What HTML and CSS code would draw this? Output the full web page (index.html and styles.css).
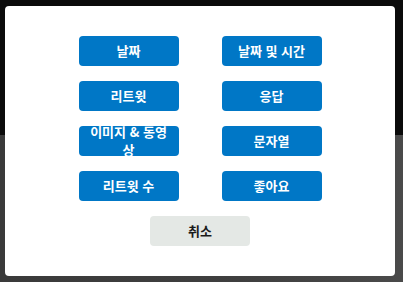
FILE: index.html
```html
<!DOCTYPE html>
<html lang="ko">
<head>
    <meta charset="UTF-8">
    <meta name="viewport" content="width=device-width, initial-scale=1.0">
    <title>정렬 기준</title>
    <link rel="stylesheet" href="styles.css">
</head>
<body>
    <div class="page">
        <div class="hero"></div>
        <div class="content"></div>
    </div>

    <div class="modal">
        <div class="options">
            <button class="option">날짜</button>
            <button class="option">날짜 및 시간</button>
            <button class="option">리트윗</button>
            <button class="option">응답</button>
            <button class="option">이미지 &amp; 동영상</button>
            <button class="option">문자열</button>
            <button class="option">리트윗 수</button>
            <button class="option">좋아요</button>
        </div>
        <button class="cancel">취소</button>
    </div>
</body>
</html>
```

FILE: styles.css
```css
/* page behind the dialog, dimmed */
body {
    margin: 0;
    font-family: "Noto Sans CJK KR", "Noto Sans", sans-serif;
    background-color: #3e3e3e;
}

.page {
    height: 282px;
    display: flex;
    flex-direction: column;
}

.hero {
    height: 135px;
    background-color: #0b0b0b;
}

.content {
    flex: 1;
    background: linear-gradient(90deg, #3a3a3a 0%, #3f3f3f 60%, #4a4a4a 100%);
}

/* dialog */
.modal {
    position: absolute;
    top: 6px;
    left: 5px;
    width: 390px;
    padding: 30px 0;
    background-color: #fff;
    border-radius: 4px;
    display: flex;
    flex-direction: column;
    align-items: center;
    gap: 15px;
}

.options {
    display: grid;
    grid-template-columns: 100px 100px;
    column-gap: 43px;
    row-gap: 15px;
}

.option,
.cancel {
    height: 30px;
    width: 100px;
    padding: 0 9px;
    border: none;
    border-radius: 4px;
    font-family: inherit;
    font-size: 13px;
    font-weight: bold;
    line-height: 18px;
    display: flex;
    align-items: center;
    justify-content: center;
    text-align: center;
    cursor: pointer;
}

.option {
    background-color: #0077c6;
    color: #fff;
}

.cancel {
    background-color: #e4e8e5;
    color: #1a1a1a;
}
```
